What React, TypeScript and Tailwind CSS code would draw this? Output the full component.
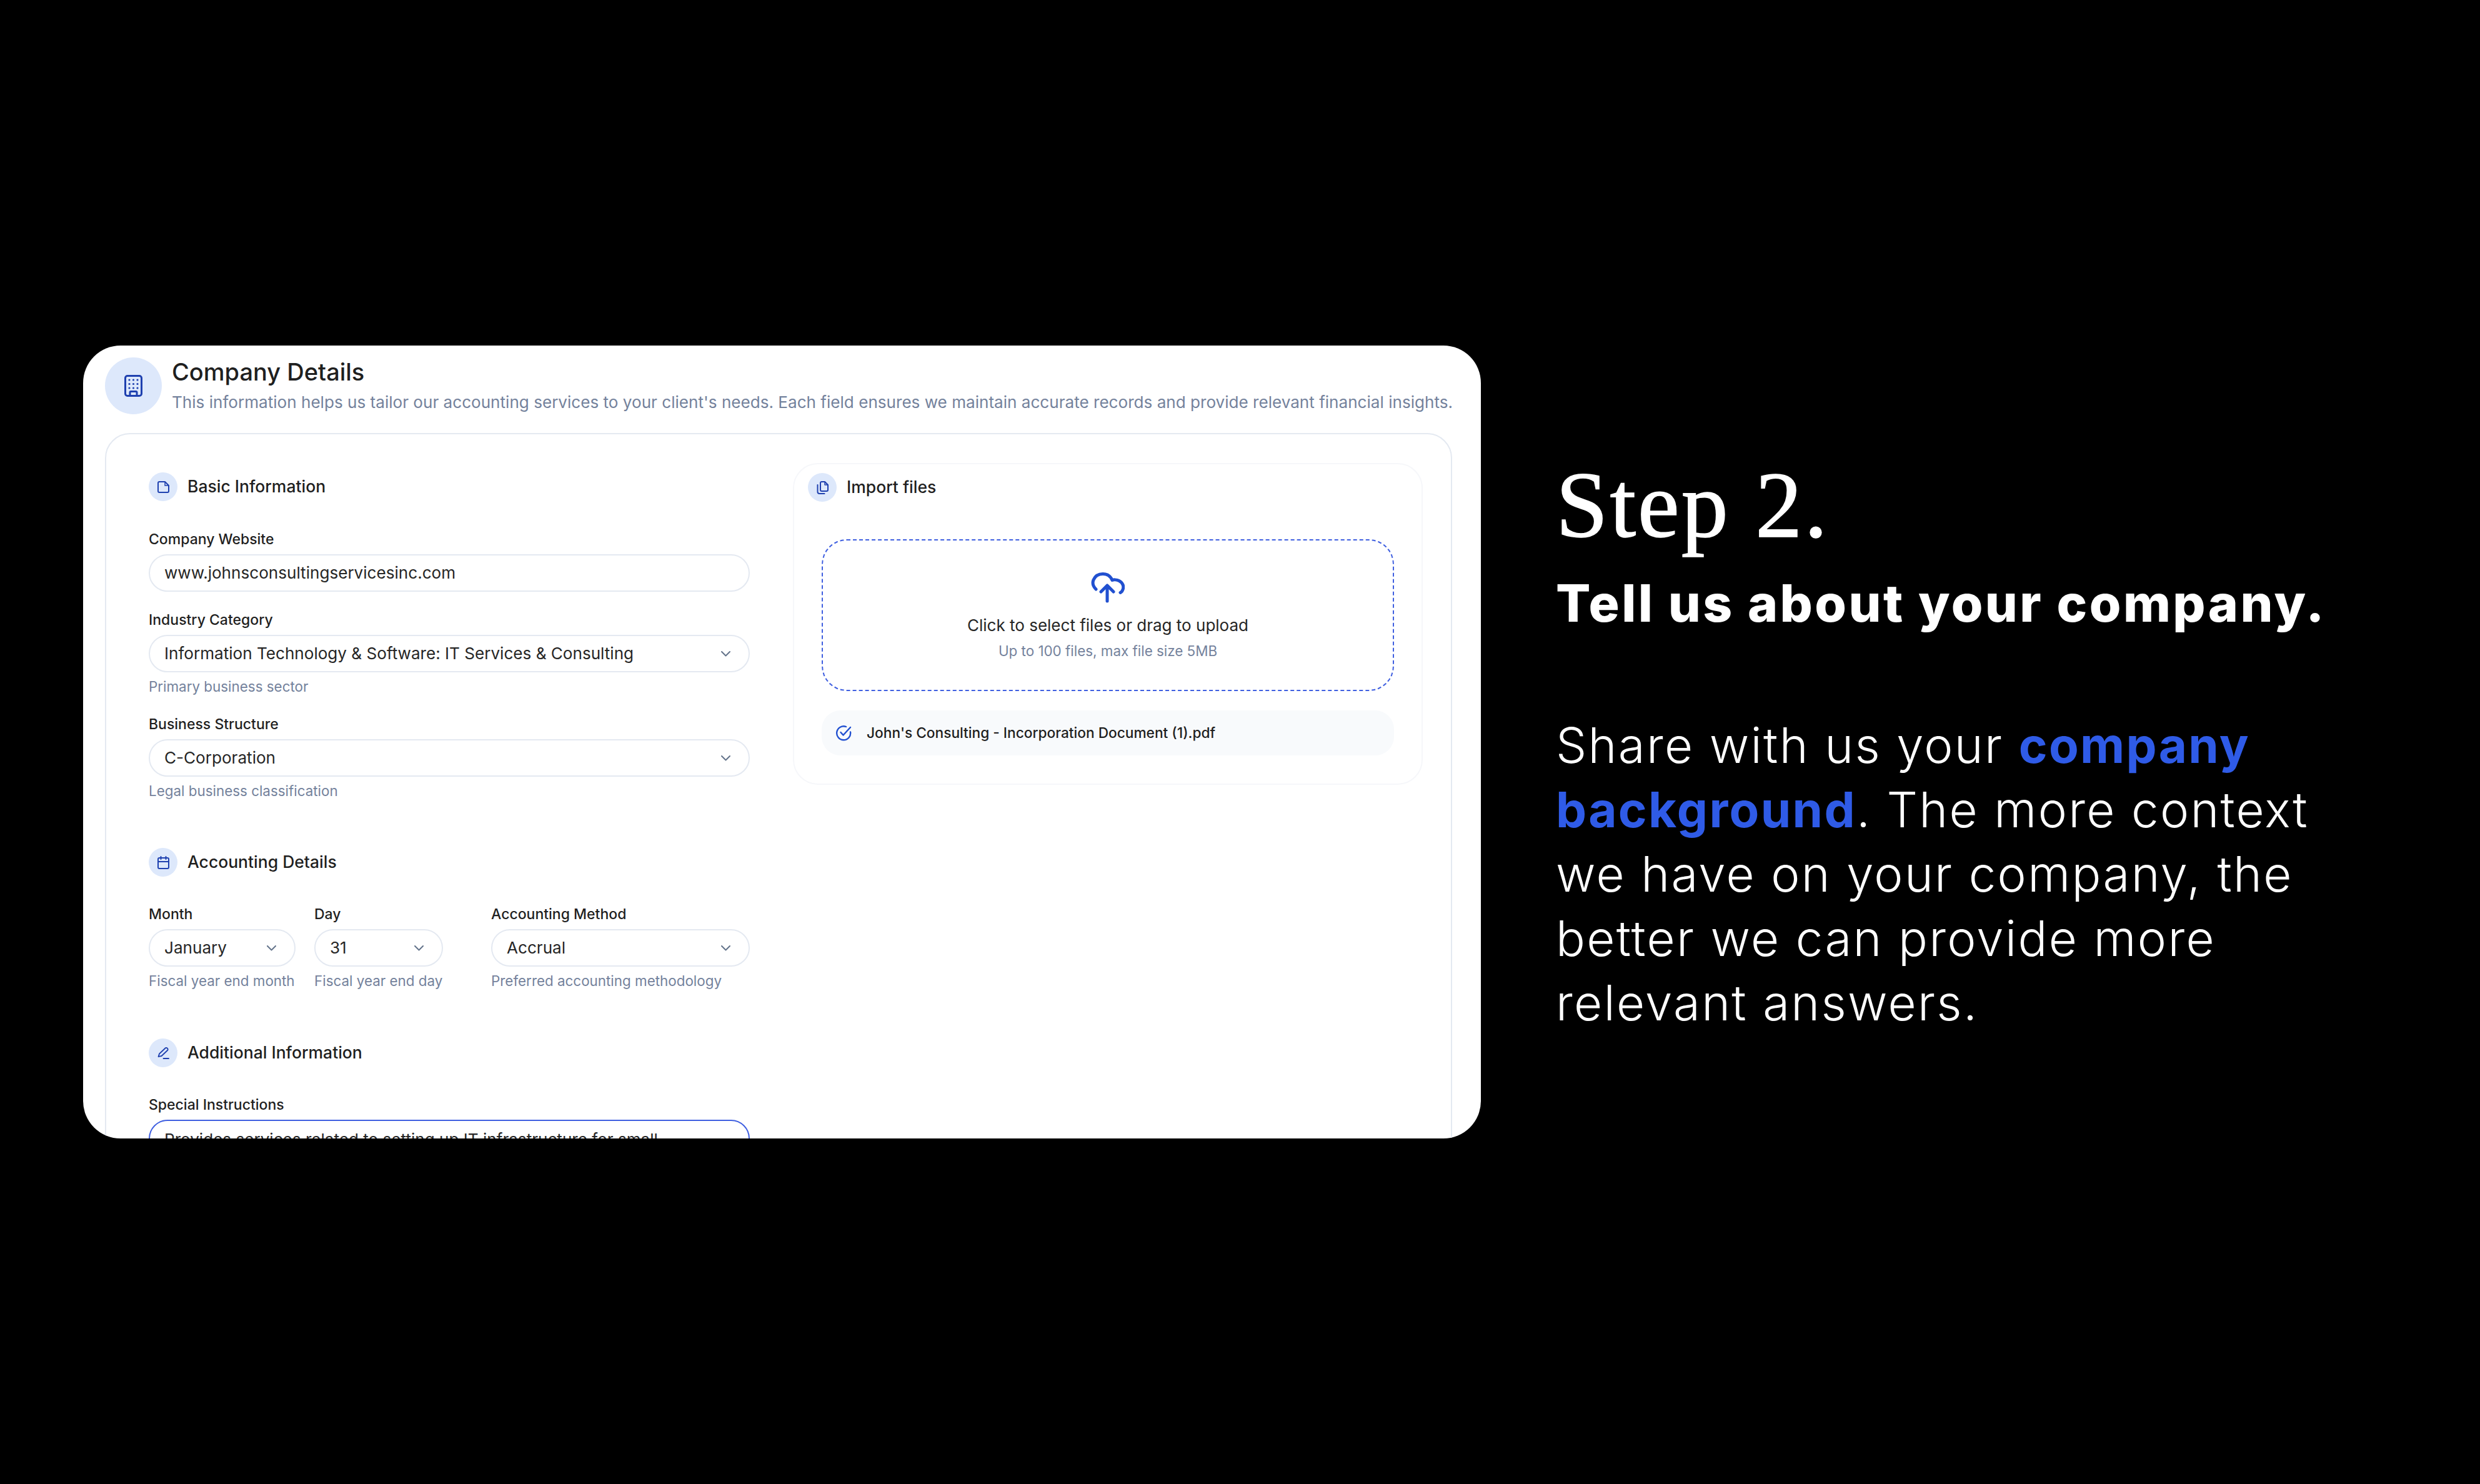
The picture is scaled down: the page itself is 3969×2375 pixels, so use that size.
import React from "react";

const inter = "font-['Inter',sans-serif]";

function SectionIcon({ children }: { children: React.ReactNode }) {
  return (
    <div className="flex h-[46px] w-[46px] shrink-0 items-center justify-center rounded-full bg-[#dde8fb]">
      {children}
    </div>
  );
}

function SectionTitle({ icon, title }: { icon: React.ReactNode; title: string }) {
  return (
    <div className="flex h-[46px] items-center gap-[16px]">
      <SectionIcon>{icon}</SectionIcon>
      <span className="text-[26.5px] font-medium text-[#1f1f1f]">{title}</span>
    </div>
  );
}

function Chevron() {
  return (
    <svg width="15" height="9" viewBox="0 0 15 9" fill="none" className="shrink-0">
      <path d="M1 1l6.5 6.5L14 1" stroke="#64748b" strokeWidth="2" strokeLinecap="round" strokeLinejoin="round" />
    </svg>
  );
}

function Control({ value, select }: { value: string; select?: boolean }) {
  return (
    <div className="flex h-[60px] items-center justify-between rounded-[30px] border-[2.5px] border-[#e4e9f1] bg-white pl-[23px] pr-[29px]">
      <span className="whitespace-nowrap text-[26.1px] text-[#262626]">{value}</span>
      {select && <Chevron />}
    </div>
  );
}

function Field({
  label,
  value,
  helper,
  select,
  className,
}: {
  label: string;
  value: string;
  helper?: string;
  select?: boolean;
  className?: string;
}) {
  return (
    <div className={className}>
      <div className="mb-[9px] h-[30px] whitespace-nowrap text-[23px] font-medium leading-[30px] text-[#1f1f1f]">{label}</div>
      <Control value={value} select={select} />
      {helper && <div className="mt-[8px] h-[30px] whitespace-nowrap text-[22.4px] leading-[30px] text-[#74829c]">{helper}</div>}
    </div>
  );
}

const blue = "#1e40af";

export default function App() {
  return (
    <div className={`flex h-[2375px] w-[3969px] items-center overflow-hidden bg-black ${inter}`}>
      {/* screenshot card */}
      <div className="ml-[133px] h-[1269px] w-[2237px] shrink-0 overflow-hidden rounded-[60px] bg-white pl-[35px] pr-[46px] pt-[19px]">
        <div className="flex gap-[16px]">
          <div className="flex h-[91px] w-[91px] shrink-0 items-center justify-center rounded-full bg-[#dde8fb]">
            <svg width="29" height="35" viewBox="0 0 29 35" fill="none">
              <rect x="1.5" y="1.5" width="26" height="32" rx="3.5" stroke={blue} strokeWidth="3" />
              <g fill={blue}>
                <circle cx="8" cy="8" r="1.6" /><circle cx="14.5" cy="8" r="1.6" /><circle cx="21" cy="8" r="1.6" />
                <circle cx="8" cy="14.5" r="1.6" /><circle cx="14.5" cy="14.5" r="1.6" /><circle cx="21" cy="14.5" r="1.6" />
                <circle cx="8" cy="21" r="1.6" /><circle cx="14.5" cy="21" r="1.6" /><circle cx="21" cy="21" r="1.6" />
              </g>
              <path d="M9 33v-5a1.5 1.5 0 0 1 1.5-1.5h8A1.5 1.5 0 0 1 20 28v5" stroke={blue} strokeWidth="3" />
            </svg>
          </div>
          <div>
            <div className="text-[38px] font-medium leading-[47px] text-[#1f1f1f]">Company Details</div>
            <div className="mt-[7px] whitespace-nowrap text-[26.1px] leading-[36px] text-[#74829c]">
              This information helps us tailor our accounting services to your client's needs. Each field ensures we maintain accurate records and provide relevant financial insights.
            </div>
          </div>
        </div>

        <div className="mt-[30px] flex h-[1200px] rounded-[40px] border-[2.5px] border-[#e4e9f1] pl-[68px] pr-[43px] pt-[61px]">
          {/* left column */}
          <div className="w-[962px] shrink-0">
            <SectionTitle
              title="Basic Information"
              icon={
                <svg width="19" height="19" viewBox="0 0 19 19" fill="none">
                  <path d="M3 1h9l6 6v9a2 2 0 0 1-2 2H3a2 2 0 0 1-2-2V3a2 2 0 0 1 2-2z" stroke={blue} strokeWidth="2" strokeLinejoin="round" />
                  <path d="M12 1v6h6" stroke={blue} strokeWidth="1.5" />
                </svg>
              }
            />
            <Field className="mt-[46px]" label="Company Website" value="www.johnsconsultingservicesinc.com" />
            <Field className="mt-[30px]" label="Industry Category" value="Information Technology & Software: IT Services & Consulting" helper="Primary business sector" select />
            <Field className="mt-[30px]" label="Business Structure" value="C-Corporation" helper="Legal business classification" select />

            <div className="mt-[76px]">
              <SectionTitle
                title="Accounting Details"
                icon={
                  <svg width="19" height="21" viewBox="0 0 19 21" fill="none" stroke={blue} strokeWidth="2" strokeLinecap="round">
                    <rect x="1" y="3" width="17" height="17" rx="2" />
                    <path d="M1 9h17M5.5 1v4M13.5 1v4" />
                  </svg>
                }
              />
            </div>
            <div className="mt-[45px] flex">
              <Field className="w-[235px]" label="Month" value="January" helper="Fiscal year end month" select />
              <Field className="ml-[30px] w-[206px]" label="Day" value="31" helper="Fiscal year end day" select />
              <Field className="ml-[77px] w-[414px]" label="Accounting Method" value="Accrual" helper="Preferred accounting methodology" select />
            </div>

            <div className="mt-[77px]">
              <SectionTitle
                title="Additional Information"
                icon={
                  <svg width="19" height="19" viewBox="0 0 19 19" fill="none" stroke={blue} strokeWidth="1.8" strokeLinecap="round" strokeLinejoin="round">
                    <path d="M1.5 15l1.500-4.500L12.500 1.500a2 2 0 0 1 3 0l.5.5a2 2 0 0 1 0 3L6.500 14z" />
                    <path d="M9.500 18h8.500" />
                  </svg>
                }
              />
            </div>
            <div className="mt-[45px] h-[30px] text-[23px] font-medium leading-[30px] text-[#1f1f1f]">Special Instructions</div>
            <div className="mt-[9px] h-[150px] rounded-[30px] border-[2.5px] border-[#3f5fe0] pl-[23px] pt-[13px] text-[26.1px] leading-[34px] text-[#262626]">
              Provides services related to setting up IT infrastructure for small
            </div>
          </div>

          {/* right column */}
          <div className="ml-[69px] mt-[-15px] h-[515px] w-[1008px] shrink-0 rounded-[40px] border-[2px] border-[#f6f7fa] px-[44px] pt-[14px]">
            <div className="ml-[-22px]">
              <SectionTitle
                title="Import files"
                icon={
                  <svg width="19" height="21" viewBox="0 0 19 21" fill="none" stroke={blue} strokeWidth="2" strokeLinejoin="round">
                    <path d="M6 3a2 2 0 0 1 2-2h5l5 5v8a2 2 0 0 1-2 2H8a2 2 0 0 1-2-2z" />
                    <path d="M1.500 6v11a3 3 0 0 0 3 3h8" strokeLinecap="round" />
                    <path d="M13 1v5h5" strokeWidth="1.5" />
                  </svg>
                }
              />
            </div>
            <div className="mt-[60px] flex h-[243px] w-[916px] flex-col items-center rounded-[40px] border-[2.5px] border-dashed border-[#3f5fe0] pt-[51px]">
              <svg width="54" height="49" viewBox="0 0 54 49" fill="none" stroke="#2150d0" strokeWidth="5" strokeLinecap="round" strokeLinejoin="round">
                <path d="M8 27C3 22 2 17 4 12 7 5 13 2.500 19 2.500c7 0 12 3 15 10 2-1 7-1 11 1 6 3 8 9 6 14-1 3-2 4-4 5" />
                <path d="M16 31l10-10 10 10M26 22v24" />
              </svg>
              <div className="mt-[18px] text-[26px] leading-[36px] text-[#262626]">Click to select files or drag to upload</div>
              <div className="mt-[8px] text-[22.4px] leading-[30px] text-[#74829c]">Up to 100 files, max file size 5MB</div>
            </div>
            <div className="mt-[31px] flex h-[72px] w-[916px] items-center gap-[24px] rounded-[30px] bg-[#f8fafc] pl-[22px]">
              <svg width="26" height="26" viewBox="0 0 26 26" fill="none" stroke="#2150d0" strokeWidth="2.4" strokeLinecap="round" strokeLinejoin="round">
                <path d="M24 11.500A11 11 0 1 1 17 3" />
                <path d="M8.500 12l4 4.500L24 4" />
              </svg>
              <span className="text-[22.7px] font-medium text-[#1f1f1f]">John's Consulting - Incorporation Document (1).pdf</span>
            </div>
          </div>
        </div>
      </div>

      {/* copy */}
      <div className="ml-[120px] mt-[9px] w-[1300px] text-white">
        <div className="font-['Liberation_Serif',serif] text-[150px] leading-[160px] tracking-[3px] [-webkit-text-stroke:1.5px_white]">Step 2.</div>
        <div className="mt-[28px] whitespace-nowrap text-[82px] font-extrabold leading-[100px] tracking-[3.4px]">Tell us about your company.</div>
        <div className="mt-[125px] text-[78px] font-light leading-[103px] tracking-[2.3px]">
          Share with us your <span className="font-bold text-[#2f5be7]">company background</span>. The more context we have on your company, the better we can provide more relevant answers.
        </div>
      </div>
    </div>
  );
}
